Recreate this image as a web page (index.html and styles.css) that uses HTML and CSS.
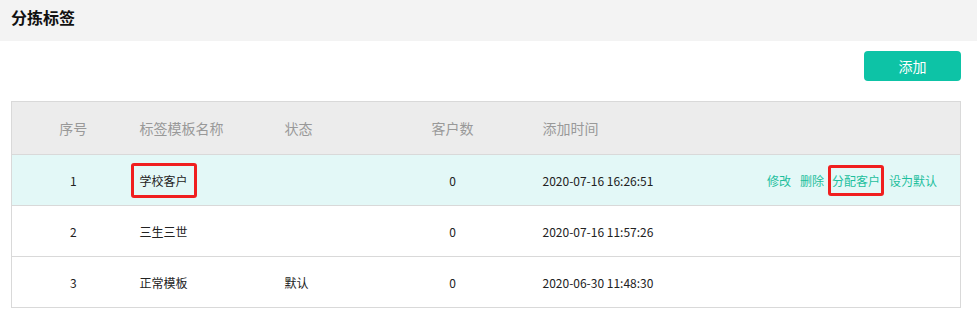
FILE: index.html
```html
<!DOCTYPE html>
<html lang="zh-CN">
<head>
<meta charset="utf-8">
<title>分拣标签</title>
<link rel="stylesheet" href="styles.css">
</head>
<body>
<div class="page-header">
  <h1 class="page-title">分拣标签</h1>
</div>
<div class="content">
  <div class="toolbar">
    <button class="btn-add" type="button">添加</button>
  </div>
  <table class="tag-table">
    <colgroup>
      <col class="c-no">
      <col class="c-name">
      <col class="c-status">
      <col class="c-count">
      <col class="c-time">
      <col class="c-ops">
    </colgroup>
    <thead>
      <tr>
        <th class="center">序号</th>
        <th>标签模板名称</th>
        <th>状态</th>
        <th class="center">客户数</th>
        <th class="time">添加时间</th>
        <th></th>
      </tr>
    </thead>
    <tbody>
      <tr class="active">
        <td class="center">1</td>
        <td><span class="mark">学校客户</span></td>
        <td></td>
        <td class="center">0</td>
        <td class="time">2020-07-16 16:26:51</td>
        <td class="ops">
          <a class="op">修改</a><a class="op">删除</a><a class="op mark-op">分配客户</a><a class="op">设为默认</a>
        </td>
      </tr>
      <tr>
        <td class="center">2</td>
        <td>三生三世</td>
        <td></td>
        <td class="center">0</td>
        <td class="time">2020-07-16 11:57:26</td>
        <td class="ops"></td>
      </tr>
      <tr>
        <td class="center">3</td>
        <td>正常模板</td>
        <td>默认</td>
        <td class="center">0</td>
        <td class="time">2020-06-30 11:48:30</td>
        <td class="ops"></td>
      </tr>
    </tbody>
  </table>
</div>
</body>
</html>
```

FILE: styles.css
```css
* { box-sizing: border-box; }
body {
  margin: 0;
  background: #fff;
  font-family: "Noto Sans CJK SC", "Noto Sans", sans-serif;
  color: #222;
}
.page-header {
  height: 41px;
  background: #f3f3f3;
  padding: 0 11px;
  display: flex;
  align-items: center;
}
.page-title {
  margin: 0;
  font-size: 16px;
  font-weight: bold;
  color: #111;
  line-height: 1;
  margin-top: -8px;
}
.content {
  padding: 0 16px 0 11px;
}
.toolbar {
  display: flex;
  justify-content: flex-end;
  padding-top: 10px;
  height: 60px;
}
.btn-add {
  width: 97px;
  height: 30px;
  border: none;
  border-radius: 4px;
  background: #0dc3a6;
  color: #fff;
  font-family: inherit;
  font-size: 14px;
  padding: 0;
}
.tag-table {
  width: 950px;
  border-collapse: collapse;
  border: 1px solid #d9d9d9;
  font-size: 12px;
  table-layout: fixed;
}
.c-no { width: 123px; }
.c-name { width: 145px; }
.c-status { width: 100px; }
.c-count { width: 146px; }
.c-time { width: 200px; }
.tag-table th {
  height: 53px;
  background: #ececec;
  color: #999;
  font-size: 14px;
  font-weight: normal;
  text-align: left;
  padding: 0 0 0 5px;
  border-bottom: 1px solid #d9d9d9;
}
.tag-table td {
  height: 51px;
  padding: 0 0 0 5px;
  border-bottom: 1px solid #d9d9d9;
  text-align: left;
}
.tag-table .center { text-align: center; padding-left: 0; }
.tag-table .time { padding-left: 17px; }
.tag-table tr.active td { background: #e3f8f7; }
.tag-table td.ops {
  text-align: right;
  padding: 0 23px 0 0;
  white-space: nowrap;
}
.op {
  color: #1dbf9d;
  margin-left: 9px;
  cursor: pointer;
}
.mark {
  display: inline-block;
  margin-left: -9px;
  padding: 6px 6px;
  border: 3px solid #f01f1f;
  border-radius: 3px;
}
.mark-op {
  display: inline-block;
  padding: 4px 1px;
  margin: 0 -4px 0 4px;
  border: 3px solid #f01f1f;
  border-radius: 3px;
}
.mark-op + .op { margin-left: 9px; }
```
